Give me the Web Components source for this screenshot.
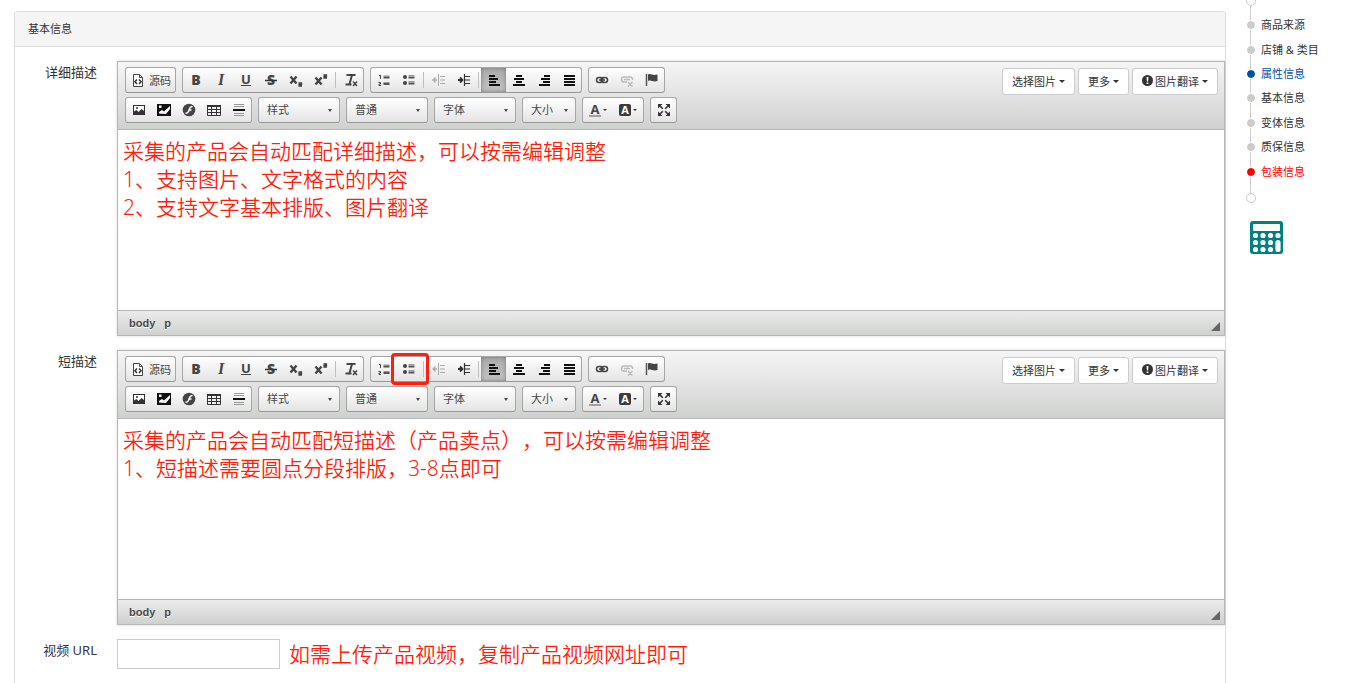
<!DOCTYPE html>
<html lang="zh-CN">
<head>
<meta charset="utf-8">
<title>基本信息</title>
<style>
  body { margin: 0; background: #fff; color: #333; font-family: "Noto Sans", "Noto Sans CJK SC", sans-serif; font-size: 13px; text-spacing-trim: space-all; }
</style>
</head>
<body>
<product-page>
  <info-panel heading="基本信息">
    <description-field label="详细描述">
      <div>采集的产品会自动匹配详细描述，可以按需编辑调整</div>
      <div>1、支持图片、文字格式的内容</div>
      <div>2、支持文字基本排版、图片翻译</div>
    </description-field>
    <description-field label="短描述" highlight="ul">
      <div>采集的产品会自动匹配短描述（产品卖点），可以按需编辑调整</div>
      <div>1、短描述需要圆点分段排版，3-8点即可</div>
    </description-field>
    <url-field label="视频 URL">如需上传产品视频，复制产品视频网址即可</url-field>
  </info-panel>
  <section-nav slot="aside"></section-nav>
</product-page>

<script>
const svg = (inner, w = 16) => `<svg width="${w}" height="16" viewBox="0 0 ${w} 16" aria-hidden="true">${inner}</svg>`;
const bars = rows => rows.map(([x, y, w]) => `<rect x="${x}" y="${y}" width="${w}" height="2" fill="#111"/>`).join('');
const glyph = (t, extra = '') => `<text x="8" y="13" text-anchor="middle" font-family="Open Sans, sans-serif" font-weight="800" font-size="14" fill="#454545" ${extra}>${t}</text>`;
const ICONS = {
  source: svg('<path d="M3.5 2.5h6l3 3v9h-9z" fill="#fff" stroke="#454545"/><path d="M9.5 2.5v3h3" fill="none" stroke="#454545"/><path d="M7 7.500L5 9.700l2 2.200M9 7.500l2 2.200-2 2.200" fill="none" stroke="#333" stroke-width="1.5"/>'),
  bold: svg(glyph('B')),
  italic: svg(glyph('I', 'style="font-family:Liberation Serif,serif;font-style:italic;font-weight:700;font-size:16px"')),
  underline: svg('<text x="8" y="12" text-anchor="middle" font-family="Open Sans, sans-serif" font-weight="700" font-size="13" fill="#454545">U</text><path d="M3 13.500h10" stroke="#454545"/>'),
  strike: svg(glyph('S') + '<path d="M2 8.500h12" stroke="#333" stroke-width="1.500"/>'),
  sub: svg('<path d="M2.500 4.500l6 7M8.500 4.500l-6 7" stroke="#454545" stroke-width="2.400"/><path d="M10.500 11h3v1.500h-2.500v1.500h3" fill="none" stroke="#454545" stroke-width="1.300"/>'),
  sup: svg('<path d="M2.500 5.500l6 7M8.500 5.500l-6 7" stroke="#454545" stroke-width="2.400"/><path d="M10.500 3h3v1.500h-2.500v1.500h3" fill="none" stroke="#454545" stroke-width="1.300"/>'),
  clear: svg('<path d="M3.500 3h9M9 3L6.500 12M2.500 12.500h6" fill="none" stroke="#454545" stroke-width="2"/><path d="M10 9.500l4 4.500M14 9.500l-4 4.500" stroke="#454545" stroke-width="1.500"/>'),
  ol: svg('<path d="M3 3.500h1.500v3.500M2.500 10.500h2v1.500h-1.500v1.500h2" fill="none" stroke="#454545"/><path d="M7.500 4h6M7.500 10.500h6" stroke="#999"/><path d="M7.500 5.500h6M7.500 12h6" stroke="#555" stroke-width="2"/>'),
  ul: svg('<circle cx="4" cy="5" r="2" fill="#454545"/><circle cx="4" cy="11" r="2" fill="#454545"/><path d="M7.500 3.500h6M7.500 9.500h6" stroke="#999"/><path d="M7.500 5.500h6M7.500 11.500h6" stroke="#555" stroke-width="2"/>'),
  outdent: svg('<g stroke="#aaa" fill="none"><path d="M2 8h4M4.500 5.500L2 8l2.500 2.500" stroke-width="1.300"/><path d="M7.500 2v12M9 4.500h5M9 8h5M9 11.500h5"/></g>'),
  indent: svg('<g stroke="#333" fill="none"><path d="M2 8h4M4 5.500L6.500 8 4 10.500" stroke-width="1.800"/><path d="M8.500 2v12M9 4.500h5M9 8h5M9 11.500h5" stroke-width="1.200"/></g>'),
  left: svg(bars([[3,3,6],[3,6,9],[3,9,7],[3,12,11]])),
  center: svg(bars([[5,3,6],[3,6,10],[5,9,6],[2,12,12]])),
  right: svg(bars([[8,3,6],[5,6,9],[7,9,7],[3,12,11]])),
  justify: svg(bars([[3,3,11],[3,6,11],[3,9,11],[3,12,11]])),
  link: svg('<g fill="none" stroke="#454545" stroke-width="1.500"><rect x="2.500" y="5.500" width="6.500" height="5" rx="2.500"/><rect x="7" y="5.500" width="6.500" height="5" rx="2.500"/><path d="M5 8h6"/></g>'),
  unlink: svg('<g fill="none" stroke="#bbb" stroke-width="1.500"><path d="M8 10H5a2.300 2.300 0 0 1 0-5h2.500a2 2 0 0 1 1.500 1M8 6a2 2 0 0 1 1.500-1H11a2.300 2.300 0 0 1 2.500 3M5 7.500h6M9 10l4.500 4.500M13.500 10L9 14.500"/></g>'),
  anchor: svg('<path d="M2.500 2v12" stroke="#555" stroke-width="1.500"/><path d="M4 2.500c3-1.500 4 1.500 9.500 0v6.500c-5 1.500-6-1.500-9.500 0z" fill="#454545"/>'),
  image: svg('<rect x="2.500" y="3.500" width="11" height="9" fill="#fff" stroke="#333"/><path d="M3 12V9.500l2.500-1.500 2 2 3-3L13 9v3z" fill="#333"/><circle cx="6" cy="6" r="1" fill="#333"/>'),
  upload: svg('<path d="M1 2h14v12H1z" fill="#111"/><path d="M3 11.500V10l3-2 2 1.500 6-5.500v3l-4 5z" fill="#fff"/><path d="M3 3.500h2.500v2.500H3z" fill="#fff"/>'),
  flash: svg('<circle cx="8" cy="8" r="6.300" fill="#454545"/><path d="M11.500 4.500C8 4.500 8.500 8 7.500 9.500c-.6 1.300-1.500 1.800-3 1.800M7.500 8h3" fill="none" stroke="#fff" stroke-width="1.500"/>'),
  table: svg('<path d="M1.500 3.500h13v10h-13zM1 7.500h14M1 10.500h14M5.500 4v9M10.500 4v9" fill="none" stroke="#333"/><path d="M1 3h14v2H1z" fill="#333"/>'),
  rule: svg('<path d="M3 2.500h10M3 4.500h10M3 11.500h10M3 13.500h10" stroke="#999"/><path d="M2 8h12" stroke="#111" stroke-width="2"/>'),
  color: svg('<text x="7" y="12" text-anchor="middle" font-family="Open Sans, sans-serif" font-weight="700" font-size="13" fill="#454545">A</text><path d="M1 14h12" stroke="#888" stroke-width="1.500"/><path d="M15 7h4l-2 2z" fill="#333"/>', 20),
  bgcolor: svg('<rect x="1" y="2" width="12" height="12" rx="2" fill="#3b3b3b"/><text x="7" y="12" text-anchor="middle" font-family="Open Sans, sans-serif" font-weight="700" font-size="11" fill="#fff">A</text><path d="M15 7h4l-2 2z" fill="#333"/>', 20),
  full: svg('<path d="M2 2h4.500L2 6.500zM14 2H9.500L14 6.500zM2 14h4.500L2 9.500zM14 14H9.500L14 9.500z" fill="#333"/><path d="M3 3l3.800 3.800M13 3L9.200 6.800M3 13l3.800-3.800M13 13L9.200 9.200" stroke="#333" stroke-width="1.600"/>')
};

class Base extends HTMLElement {
  connectedCallback() {
    if (this.shadowRoot) return;
    this.attachShadow({ mode: 'open' }).innerHTML = this.render();
  }
}

customElements.define('product-page', class extends Base {
  render() {
    return `<style>
      :host { display: grid; grid-template-columns: minmax(0, 1fr) 144px; min-height: 100vh; padding-left: 14px; box-sizing: border-box; overflow: hidden; }
      main { display: flex; flex-direction: column; padding-top: 11px; }
    </style><main><slot></slot></main><slot name="aside"></slot>`;
  }
});

customElements.define('info-panel', class extends Base {
  render() {
    return `<style>
      :host { display: block; flex: 1; border: 1px solid #ddd; border-bottom: 0; border-radius: 4px 4px 0 0; }
      h2 { margin: 0; padding: 0 13px; font-size: 11px; font-weight: 400; line-height: 34px; background: #f5f5f5; border-bottom: 1px solid #ddd; border-radius: 3px 3px 0 0; }
      section { display: flex; flex-direction: column; gap: 14px; padding-top: 14px; }
    </style><h2>${this.getAttribute('heading')}</h2><section><slot></slot></section>`;
  }
});

customElements.define('tool-button', class extends Base {
  render() {
    const text = this.getAttribute('text') || '';
    return `<style>
      :host { display: block; position: relative; min-width: 25px; }
      button { display: flex; align-items: center; justify-content: center; gap: 3px; width: 100%; height: 100%; margin: 0; padding: 0 4px; border: 0; background: none; color: #474747; font: 11px "Noto Sans CJK SC", sans-serif; }
      svg { flex: none; overflow: visible; }
      :host([active]) button { background: linear-gradient(#aaa, #c4c4c4); box-shadow: inset 0 0 4px #777; }
      :host([marked])::after { content: ""; position: absolute; inset: -4px -8px -4px -5px; border: 3px solid #ff1f0f; border-radius: 4px; z-index: 1; }
    </style><button type="button" aria-label="${text || this.getAttribute('icon')}">${ICONS[this.getAttribute('icon')]}${text}</button>`;
  }
});

customElements.define('tool-select', class extends Base {
  render() {
    const t = this.getAttribute('text');
    return `<style>
      :host { display: block; position: relative; width: 82px; height: 26px; box-sizing: border-box; border: 1px solid #a6a6a6; border-bottom-color: #979797; border-radius: 3px; background: linear-gradient(#fff, #e4e4e4); }
      :host([small]) { width: 54px; }
      select { appearance: none; width: 100%; height: 100%; margin: 0; padding: 0 0 3px 8px; border: 0; background: none; color: #474747; font: 11px "Noto Sans CJK SC", sans-serif; }
      i { position: absolute; right: 7px; top: 11px; border: solid transparent; border-width: 3px 2px 0; border-top-color: #474747; pointer-events: none; }
    </style><select aria-label="${t}"><option>${t}</option></select><i></i>`;
  }
});

customElements.define('menu-button', class extends Base {
  render() {
    return `<style>
      :host { display: block; }
      button { display: flex; align-items: center; height: 27px; margin: 0; padding: 0 9px 2px; border: 1px solid #ccc; border-radius: 3px; background: #fff; color: #333; font: 11px "Noto Sans CJK SC", sans-serif; white-space: nowrap; }
      i { margin: 2px 0 0 3px; border: solid transparent; border-width: 3px 3px 0; border-top-color: #333; }
    </style><button type="button"><slot name="icon"></slot><slot></slot><i></i></button>`;
  }
});

customElements.define('editor-toolbar', class extends Base {
  render() {
    const mark = this.getAttribute('highlight');
    const b = list => list.split(' ').map(n => n === '|' ? '<hr>' :
      `<tool-button icon="${n}"${n === 'left' ? ' active' : ''}${n === mark ? ' marked' : ''}></tool-button>`).join('');
    return `<style>
      :host { display: flex; justify-content: space-between; align-items: flex-start; padding: 5px 6px 6px 7px; border-bottom: 1px solid #b6b6b6; background: linear-gradient(#f5f5f5, #cfd1cf); }
      .tools { display: grid; gap: 4px; }
      .row { display: flex; gap: 6px; }
      .group { display: flex; height: 26px; box-sizing: border-box; border: 1px solid #a6a6a6; border-bottom-color: #979797; border-radius: 3px; background: linear-gradient(#fff, #e4e4e4); }
      hr { width: 1px; margin: 4px 2px; border: 0; background: #c0c0c0; }
      .wide tool-button { width: 30px; }
      .menus { display: flex; gap: 3px; padding-top: 1px; }
      .menus svg { margin-right: 2px; }
    </style>
    <div class="tools">
      <div class="row">
        <div class="group"><tool-button icon="source" text="源码"></tool-button></div>
        <div class="group">${b('bold italic underline strike sub sup | clear')}</div>
        <div class="group">${b('ol ul | outdent indent | left center right justify')}</div>
        <div class="group">${b('link unlink anchor')}</div>
      </div>
      <div class="row">
        <div class="group">${b('image upload flash table rule')}</div>
        <tool-select text="样式"></tool-select>
        <tool-select text="普通"></tool-select>
        <tool-select text="字体"></tool-select>
        <tool-select text="大小" small></tool-select>
        <div class="group wide">${b('color bgcolor')}</div>
        <div class="group">${b('full')}</div>
      </div>
    </div>
    <div class="menus">
      <menu-button>选择图片</menu-button>
      <menu-button>更多</menu-button>
      <menu-button><svg slot="icon" width="11" height="11" viewBox="0 0 11 11" aria-hidden="true"><circle cx="5.500" cy="5.500" r="5.500" fill="#333"/><path d="M4.500 2h2l-.4 4.500H4.900zM4.600 7.500h1.800V9H4.600z" fill="#fff"/></svg>图片翻译</menu-button>
    </div>`;
  }
});

const FIELD = `
  :host { display: grid; grid-template-columns: 82px minmax(0, 1fr); column-gap: 20px; align-items: start; }
  .label { text-align: right; line-height: 22px; font-size: 13px; }
  .note { color: #ff1f0f; font-size: 21px; font-weight: 350; line-height: 28px; }`;

customElements.define('description-field', class extends Base {
  render() {
    return `<style>${FIELD}
      .editor { border: 1px solid #b6b6b6; box-shadow: 0 0 3px rgba(0, 0, 0, .15); }
      .content { min-height: 180px; box-sizing: border-box; padding: 7px 5px; outline: 0; background: #fff; }
      footer { display: flex; align-items: center; gap: 9px; height: 24px; padding: 0 4px 0 11px; border-top: 1px solid #b6b6b6; background: linear-gradient(#ebebeb, #cfd1cf); color: #484848; font: bold 11px "Liberation Sans", sans-serif; text-shadow: 0 1px 0 #fff; }
      footer a { color: inherit; text-decoration: none; }
      footer i { margin: 7px 0 0 auto; border: solid transparent; border-width: 0 0 9px 9px; border-bottom-color: #666; }
    </style>
    <span class="label" id="label">${this.getAttribute('label')}</span>
    <div class="editor">
      <editor-toolbar highlight="${this.getAttribute('highlight') || ''}"></editor-toolbar>
      <div class="content note" contenteditable="true" spellcheck="false" role="textbox" aria-multiline="true" aria-labelledby="label"><slot></slot></div>
      <footer><a href="#body">body</a><a href="#p">p</a><i></i></footer>
    </div>`;
  }
});

customElements.define('url-field', class extends Base {
  render() {
    return `<style>${FIELD}
      .line { display: flex; align-items: center; gap: 9px; }
      input { width: 163px; height: 30px; box-sizing: border-box; margin: 0; padding: 4px 8px; border: 1px solid #ccc; font: inherit; }
    </style>
    <label class="label" for="url">${this.getAttribute('label')}</label>
    <div class="line"><input id="url" type="text"><span class="note"><slot></slot></span></div>`;
  }
});

customElements.define('section-nav', class extends Base {
  render() {
    const items = ['商品来源', '店铺 &amp; 类目', '属性信息', '基本信息', '变体信息', '质保信息', '包装信息'];
    const state = { 2: 'current', 6: 'error' };
    return `<style>
      :host { display: block; margin-top: -4px; padding-left: 20px; font-size: 11px; }
      nav { position: relative; }
      nav::before { content: ""; position: absolute; left: 4px; top: 10px; bottom: 10px; width: 1px; background: #ccc; }
      .end { display: block; width: 10px; height: 10px; box-sizing: border-box; border: 1px solid #ccc; border-radius: 50%; background: #fff; }
      ul { display: flex; flex-direction: column; height: 171px; margin: 7px 0 9px; padding: 0; list-style: none; }
      li { flex: 1; display: flex; align-items: center; }
      a { display: flex; align-items: center; gap: 5px; color: #333; text-decoration: none; line-height: 16px; position: relative; }
      a::before { content: ""; width: 8px; height: 8px; border: 1px solid #fff; border-radius: 50%; background: #ccc; background-clip: padding-box; }
      .current { color: #0050a8; } .error { color: #f00; }
      .current::before, .error::before { background-color: currentColor; }
      .calc { display: block; margin-top: 18px; margin-left: 4px; padding: 0; border: 0; background: none; }
      svg { display: block; }
    </style>
    <nav><span class="end"></span>
      <ul>${items.map((t, i) => `<li><a href="#s${i}" class="${state[i] || ''}">${t}</a></li>`).join('')}</ul>
      <span class="end"></span></nav>
    <button class="calc" type="button" aria-label="计算器"><svg width="33" height="33" viewBox="0 0 33 33"><rect width="33" height="33" rx="3" fill="#008080"/><rect x="3" y="3" width="27" height="7" rx="1" fill="#fff"/><g fill="#fff">${[14.5, 21.5, 28.5].map(y => [5.5, 13, 20.5].map(x => `<circle cx="${x}" cy="${y}" r="2.600"/>`).join('')).join('')}<circle cx="28" cy="14.500" r="2.600"/><rect x="25.400" y="19" width="5.200" height="12" rx="2.500"/></g></svg></button>`;
  }
});
</script>
</body>
</html>
